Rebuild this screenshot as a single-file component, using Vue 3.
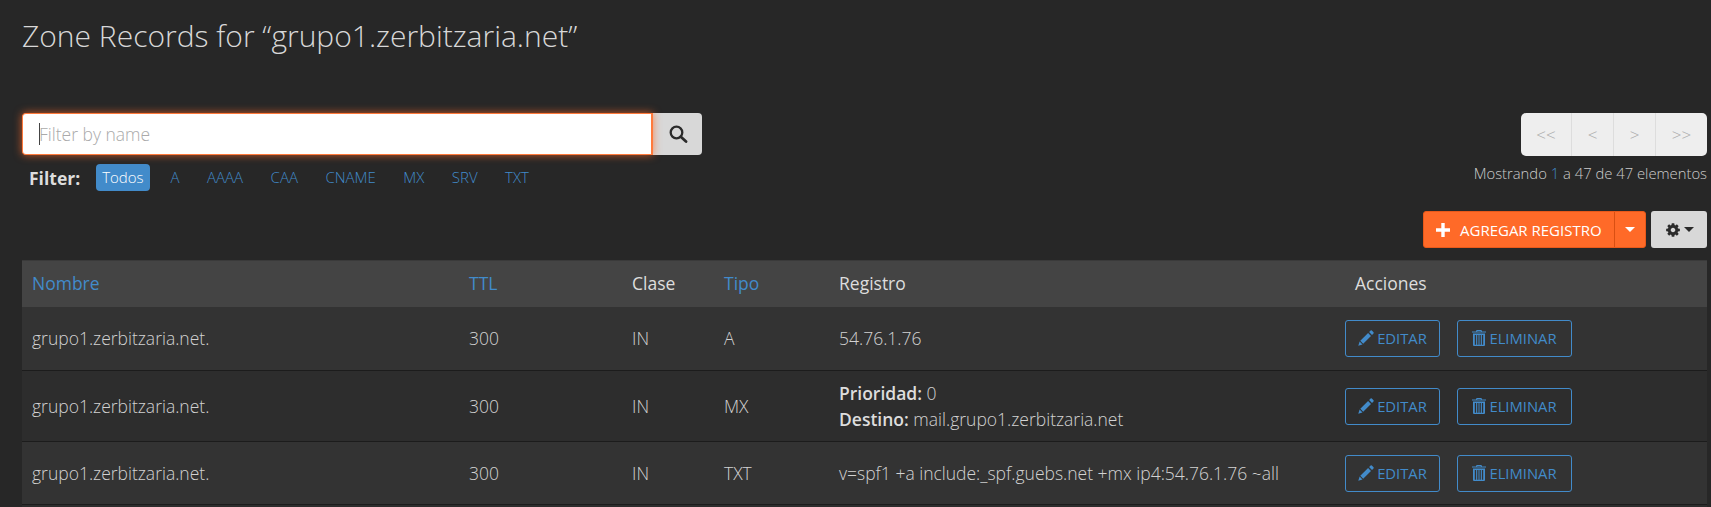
<script setup>
const types = ['A', 'AAAA', 'CAA', 'CNAME', 'MX', 'SRV', 'TXT']
const pages = ['<<', '<', '>', '>>']
const rows = [
  { type: 'A', value: '54.76.1.76', cls: 'r1' },
  { type: 'MX', prio: '0', dest: 'mail.grupo1.zerbitzaria.net', cls: 'r2' },
  { type: 'TXT', value: 'v=spf1 +a include:_spf.guebs.net +mx ip4:54.76.1.76 ~all', cls: 'r3' }
]
</script>

<template>
  <div class="page">
    <h1 class="title">Zone Records for “grupo1.zerbitzaria.net”</h1>

    <div class="tools">
      <div class="left">
        <div class="search">
          <div class="input"><span class="cursor"></span><span class="ph">Filter by name</span></div>
          <button class="search-btn" aria-label="Buscar">
            <svg width="20" height="18" viewBox="0 0 20 18"><circle cx="8.500" cy="7.500" r="5.800" fill="none" stroke="#2b2b2b" stroke-width="2.300"/><path d="M12.800 11.800l5.200 4.700" fill="none" stroke="#2b2b2b" stroke-width="2.800" stroke-linecap="round"/></svg>
          </button>
        </div>
        <div class="filters">
          <strong class="flabel">Filter:</strong>
          <span class="pill active">Todos</span>
          <span v-for="t in types" :key="t" class="pill">{{ t }}</span>
        </div>
      </div>

      <div class="right">
        <div class="pager">
          <span v-for="p in pages" :key="p" class="pg">{{ p }}</span>
        </div>
        <div class="info">Mostrando <span class="blue">1</span> a 47 de 47 elementos</div>
        <div class="actions">
          <div class="add">
            <span class="add-main">
              <svg width="14" height="14" viewBox="0 0 14 14"><path fill="#fff" d="M5.300 0h3.400v5.300H14v3.400H8.700V14H5.300V8.700H0V5.300h5.300z"/></svg>
              AGREGAR REGISTRO
            </span>
            <span class="add-caret"><i class="caret white"></i></span>
          </div>
          <button class="gear" aria-label="Ajustes">
            <svg width="16" height="16" viewBox="0 0 1792 1792"><path fill="#2b2b2b" d="M1152 896q0-106-75-181t-181-75-181 75-75 181 75 181 181 75 181-75 75-181zm512-109v222q0 12-8 23t-20 13l-185 28q-19 54-39 91 35 50 107 138 10 12 10 25t-9 23q-27 37-99 108t-94 71q-12 0-26-9l-138-108q-44 23-91 38-16 136-29 186-7 28-36 28h-222q-14 0-24.500-8.500t-11.500-21.500l-28-184q-49-16-90-37l-141 107q-10 9-25 9-14 0-25-11-126-114-165-168-7-10-7-23 0-12 8-23 15-21 51-66.500t54-70.500q-27-50-41-99l-183-27q-13-2-21-12.500t-8-23.500v-222q0-12 8-23t19-13l186-28q14-46 39-92-40-57-107-138-10-12-10-24 0-10 9-23 26-36 98.500-107.500t94.500-71.500q13 0 26 10l138 107q44-23 91-38 16-136 29-186 7-28 36-28h222q14 0 24.500 8.500t11.500 21.500l28 184q49 16 90 37l142-107q9-9 24-9 13 0 25 10 129 119 165 170 7 8 7 22 0 12-8 23-15 21-51 66.500t-54 70.500q26 50 41 98l183 28q13 2 21 12.500t8 23.500z"/></svg>
            <i class="caret dark"></i>
          </button>
        </div>
      </div>
    </div>

    <table class="grid">
      <colgroup>
        <col class="c1" />
        <col class="c2" />
        <col class="c3" />
        <col class="c4" />
        <col class="c5" />
        <col />
      </colgroup>
      <thead>
        <tr>
          <th class="link">Nombre</th>
          <th class="link">TTL</th>
          <th>Clase</th>
          <th class="link">Tipo</th>
          <th>Registro</th>
          <th>Acciones</th>
        </tr>
      </thead>
      <tbody>
        <tr v-for="r in rows" :key="r.cls" :class="r.cls">
          <td>grupo1.zerbitzaria.net.</td>
          <td>300</td>
          <td>IN</td>
          <td>{{ r.type }}</td>
          <td>
            <template v-if="r.value">{{ r.value }}</template>
            <template v-else>
              <div><strong>Prioridad:</strong> {{ r.prio }}</div>
              <div><strong>Destino:</strong> {{ r.dest }}</div>
            </template>
          </td>
          <td class="btns">
            <button class="act edit">
              <svg width="16" height="16" viewBox="0 0 16 16"><path fill="#428bca" d="M12.600.5q.6-.5 1.200 0l1.700 1.700q.5.6 0 1.200l-1.500 1.500-2.900-2.900zM10.100 3l2.900 2.900-7.800 7.800-2.900-2.900zM1.600 11.500l2.900 2.900-4.200 1.300z"/></svg>
              <span>EDITAR</span>
            </button>
            <button class="act del">
              <svg width="14" height="16" viewBox="0 0 14 16"><path fill="#428bca" fill-rule="evenodd" d="M4.500 0h5l.5 1.400H14v1.200H0V1.400h4zM5.300 1l-.1.400h3.600L8.700 1zM1 3.600h12V15q0 1-1 1H2q-1 0-1-1zM2.800 5v9.800h1.300V5zM5.200 5v9.800h1.300V5zM7.500 5v9.800h1.300V5zM9.900 5v9.800h1.300V5z"/></svg>
              <span>ELIMINAR</span>
            </button>
          </td>
        </tr>
        <tr class="r4"><td colspan="6"></td></tr>
      </tbody>
    </table>
  </div>
</template>

<style>
html, body { margin: 0; background: #272727; }
</style>

<style scoped>
.page {
  box-sizing: border-box;
  width: 1711px;
  height: 507px;
  overflow: hidden;
  padding: 0 4px 0 22px;
  background: #272727;
  font-family: "Open Sans", sans-serif;
  font-weight: 300;
  color: #ddd;
  font-size: 17.500px;
}
.title {
  margin: 0;
  padding-top: 15px;
  font-size: 30px;
  line-height: 41px;
  font-weight: 300;
  color: #d8d8d8;
  box-sizing: border-box;
  height: 113px;
}
.tools { display: flex; justify-content: space-between; align-items: flex-start; height: 147px; }
.search { display: flex; width: 680px; height: 42px; }
.input {
  flex: 1;
  box-sizing: border-box;
  display: flex;
  align-items: center;
  background: #fff;
  border: 1px solid #ff7a3c;
  border-right-width: 2px;
  border-radius: 4px 0 0 4px;
  box-shadow: 0 0 8px rgba(255, 106, 40, .75);
  padding-left: 16px;
  position: relative;
  z-index: 1;
}
.cursor { width: 1px; height: 22px; background: #444; margin-right: -1px; }
.ph { color: #aaa; font-size: 17.500px; }
.search-btn {
  width: 49px;
  border: 0;
  background: #d8d8d8;
  border-radius: 0 4px 4px 0;
  display: flex;
  align-items: center;
  justify-content: center;
  padding: 0;
}
.filters { display: flex; align-items: center; margin-top: 9px; padding-left: 7px; height: 27px; font-size: 15px; }
.flabel { font-weight: 700; font-size: 17.500px; color: #ddd; margin-right: 16px; }
.pill { padding: 0 7px; margin-right: 13.500px; line-height: 27px; color: #428bca; }
.pill.active { padding: 0 6px; background: #428bca; color: #fff; border-radius: 4px; margin-right: 14px; }
.right { display: flex; flex-direction: column; align-items: flex-end; }
.pager {
  display: flex;
  height: 43px;
  background: #eee;
  border-radius: 5px;
  overflow: hidden;
}
.pg {
  box-sizing: border-box;
  width: 42px;
  display: flex;
  align-items: center;
  justify-content: center;
  color: #aaa;
  font-size: 17px;
  border-left: 1px solid #ddd;
}
.pg:first-child { border-left: 0; width: 50px; }
.pg:last-child { width: 52px; }
.info { margin-top: 7px; font-size: 14.800px; line-height: 20px; color: #ccc; }
.blue { color: #428bca; }
.actions { display: flex; gap: 5px; margin-top: 28px; }
.add {
  display: flex;
  height: 37px;
  width: 223px;
  background: #ff6a28;
  border: 1px solid #e8591a;
  box-sizing: border-box;
  border-radius: 3px;
  color: #fff;
  font-size: 15px;
  font-weight: 400;
}
.add-main { display: flex; flex: 1; align-items: center; gap: 10px; padding: 0 0 0 12px; border-right: 1px solid #d94f12; white-space: nowrap; }
.add-caret { width: 30px; display: flex; align-items: center; justify-content: center; }
.gear {
  width: 56px;
  height: 37px;
  border: 0;
  background: #d8d8d8;
  border-radius: 3px;
  display: flex;
  align-items: center;
  justify-content: center;
  gap: 3px;
  padding: 0;
}
.caret { display: block; width: 0; height: 0; border-left: 5px solid transparent; border-right: 5px solid transparent; border-top: 5px solid; }
.caret.white { color: #fff; }
.caret.dark { color: #2b2b2b; }
.grid { width: 1685px; border-collapse: collapse; table-layout: fixed; }
.c1 { width: 437px; }
.c2 { width: 163px; }
.c3 { width: 92px; }
.c4 { width: 115px; }
.c5 { width: 516px; }
th {
  height: 46px;
  padding: 0 0 2px 10px;
  text-align: left;
  font-weight: 400;
  background: #444;
  color: #ddd;
  border-top: 1px solid #3a3a3a;
  box-sizing: border-box;
}
th.link { color: #428bca; }
td { padding: 0 0 0 10px; border-bottom: 1px solid #1c1c1c; background: #333; color: #d2d2d2; box-sizing: border-box; line-height: 26px; }
tr.r1 td { height: 64px; }
tr.r2 td { height: 71px; background: #2d2d2d; }
tr.r3 td { height: 63px; }
tr.r4 td { height: 3px; line-height: 0; padding: 0; border: 0; background: #2d2d2d; }
td strong { font-weight: 600; color: #ddd; }
td.btns { padding-left: 0; }
.act {
  box-sizing: border-box;
  height: 37px;
  border: 1px solid #428bca;
  border-radius: 3px;
  background: transparent;
  color: #428bca;
  font-family: inherit;
  font-size: 14.800px;
  font-weight: 400;
  display: inline-flex;
  align-items: center;
  gap: 3px;
  padding: 0;
  justify-content: center;
  vertical-align: middle;
}
.edit { width: 95px; margin-right: 17px; }
.del { width: 115px; }
</style>
